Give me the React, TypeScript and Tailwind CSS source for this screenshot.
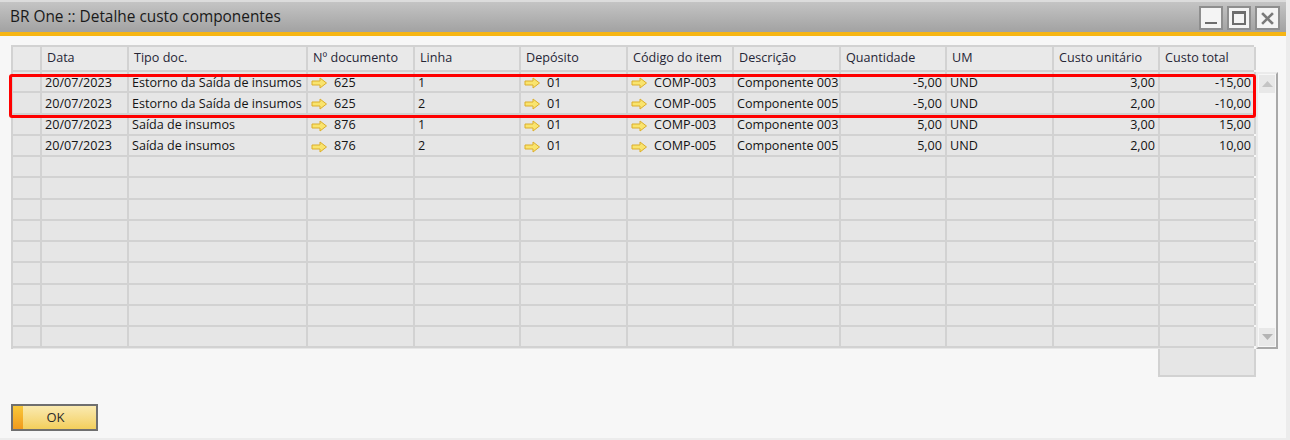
import React from "react";

const cols = [29, 87, 179, 107, 106, 107, 106, 107, 106, 107, 106, 96];
const headers = ["", "Data", "Tipo doc.", "Nº documento", "Linha", "Depósito", "Código do item", "Descrição", "Quantidade", "UM", "Custo unitário", "Custo total"];

type Row = { d: string; t: string; n: string; l: string; dep: string; c: string; desc: string; q: string; um: string; cu: string; ct: string };
const rows: Row[] = [
  { d: "20/07/2023", t: "Estorno da Saída de insumos", n: "625", l: "1", dep: "01", c: "COMP-003", desc: "Componente 003", q: "-5,00", um: "UND", cu: "3,00", ct: "-15,00" },
  { d: "20/07/2023", t: "Estorno da Saída de insumos", n: "625", l: "2", dep: "01", c: "COMP-005", desc: "Componente 005", q: "-5,00", um: "UND", cu: "2,00", ct: "-10,00" },
  { d: "20/07/2023", t: "Saída de insumos", n: "876", l: "1", dep: "01", c: "COMP-003", desc: "Componente 003", q: "5,00", um: "UND", cu: "3,00", ct: "15,00" },
  { d: "20/07/2023", t: "Saída de insumos", n: "876", l: "2", dep: "01", c: "COMP-005", desc: "Componente 005", q: "5,00", um: "UND", cu: "2,00", ct: "10,00" },
];

function Arrow() {
  return (
    <svg width="17" height="12" viewBox="0 0 17 12" className="mr-[6px] shrink-0">
      <path d="M1 4 H9 V1 L15.5 6 L9 11 V8 H1 Z" fill="#f9e46e" stroke="#dcae2a" strokeWidth="1" strokeLinejoin="round" />
    </svg>
  );
}

function Cell({ w, children, right, last }: { w: number; children?: React.ReactNode; right?: boolean; last?: boolean }) {
  return (
    <div
      style={{ width: w }}
      className={`h-full shrink-0 ${last ? "" : "border-r-2"} border-[#d2d2d2] flex items-center overflow-hidden whitespace-nowrap px-[3px] pt-[3px] ${right ? "justify-end" : ""}`}
    >
      {children}
    </div>
  );
}

export default function App() {
  const empty = Array.from({ length: 9 });
  return (
    <div className="w-[1290px] h-[440px] bg-[#ececec] text-[#141414] overflow-hidden" style={{ fontFamily: '"Open Sans", "Noto Sans", sans-serif' }}>
      <div className="w-[1286px] h-[438px] bg-[#f7f7f7] flex flex-col">
        {/* Title bar */}
        <div className="h-[32px] bg-gradient-to-b from-[#c4c4c4] to-[#a2a2a2] border-t-2 border-[#dcdcdc] flex items-center justify-between pl-[10px] pr-[6px]">
          <span className="text-[15.4px] text-[#1a1a1a]">BR One :: Detalhe custo componentes</span>
          <div className="flex gap-[4px] mt-[2px]">
            <div className="w-[24px] h-[24px] bg-[#f4f4f4] border-2 border-[#8e8e8e] flex items-end justify-center pb-[4px]">
              <div className="w-[12px] h-[2px] bg-[#6d6d6d]" />
            </div>
            <div className="w-[24px] h-[24px] bg-[#f4f4f4] border-2 border-[#8e8e8e] flex items-center justify-center">
              <div className="w-[14px] h-[14px] border-2 border-t-[3px] border-[#6d6d6d]" />
            </div>
            <div className="w-[25px] h-[24px] bg-[#f4f4f4] border-2 border-[#8e8e8e] flex items-center justify-center">
              <svg width="13" height="13" viewBox="0 0 13 13">
                <path d="M2 2 L11 11 M11 2 L2 11" stroke="#7a7a7a" strokeWidth="2.6" strokeLinecap="square" />
              </svg>
            </div>
          </div>
        </div>
        <div className="h-[4px] bg-[#f6b514]" />

        {/* Grid area */}
        <div className="relative pl-[11px] pt-[9px] text-[12.6px]">
          <div className="w-[1243px] border-l-2 border-t-2 border-[#d2d2d2]">
            {/* Header */}
            <div className="flex h-[25px] bg-[#e9e9e9] border-b-2 border-[#d2d2d2]">
              {headers.map((h, i) => (
                <div key={i} style={{ width: cols[i] }} className="shrink-0 h-full border-r-2 border-[#d2d2d2] px-[5px] pt-[2px] text-[#262636] whitespace-nowrap overflow-hidden">
                  {h}
                </div>
              ))}
            </div>
          </div>
          <div className="flex">
            <div className="w-[1243px] border-l-2 border-[#d2d2d2] bg-[#e6e6e6]">
              {rows.map((r, i) => (
                <div key={i} className="flex h-[21.25px] border-b-2 border-[#d2d2d2]">
                  <Cell w={cols[0]} />
                  <Cell w={cols[1]}>{r.d}</Cell>
                  <Cell w={cols[2]}>{r.t}</Cell>
                  <Cell w={cols[3]}><Arrow />{r.n}</Cell>
                  <Cell w={cols[4]}>{r.l}</Cell>
                  <Cell w={cols[5]}><Arrow />{r.dep}</Cell>
                  <Cell w={cols[6]}><Arrow />{r.c}</Cell>
                  <Cell w={cols[7]}>{r.desc}</Cell>
                  <Cell w={cols[8]} right>{r.q}</Cell>
                  <Cell w={cols[9]}>{r.um}</Cell>
                  <Cell w={cols[10]} right>{r.cu}</Cell>
                  <Cell w={cols[11]} right>{r.ct}</Cell>
                </div>
              ))}
              {empty.map((_, i) => (
                <div key={i} className="flex h-[21.25px] border-b-2 border-[#d2d2d2]">
                  {cols.map((w, j) => (
                    <Cell key={j} w={w} />
                  ))}
                </div>
              ))}
            </div>
            {/* Scrollbar */}
            <div className="ml-[2px] w-[22px] h-[277px] bg-[#f7f7f7] border-2 border-l-[#ebebeb] border-t-[#ebebeb] border-r-[#a9a9a9] border-b-[#a9a9a9] flex flex-col justify-between p-[1px]">
              <div className="h-[18px] bg-[#e8e8e8] flex items-center justify-center">
                <svg width="11" height="6" viewBox="0 0 11 6"><path d="M0 6 L5.5 0 L11 6 Z" fill="#c4c4c4" /></svg>
              </div>
              <div className="h-[18px] bg-[#e8e8e8] flex items-center justify-center">
                <svg width="11" height="6" viewBox="0 0 11 6"><path d="M0 0 L5.5 6 L11 0 Z" fill="#b4b4b4" /></svg>
              </div>
            </div>
          </div>
          {/* total cell */}
          <div className="flex">
            <div className="ml-[1147px] w-[98px] h-[28px] bg-[#e6e6e6] border-2 border-t-0 border-[#d2d2d2]" />
          </div>

          {/* Red highlight */}
          <div className="absolute left-[9px] top-[38px] w-[1247px] h-[44px] border-[3px] border-[#ff0000] rounded-[3px] pointer-events-none" />
        </div>

        {/* OK button */}
        <div className="pl-[11px] mt-[27px]">
          <div className="relative w-[87px] h-[27px] border-2 border-[#6f6f6f] bg-gradient-to-b from-[#faeab0] to-[#f3cf5a] flex items-center justify-center overflow-hidden">
            <div className="absolute left-0 top-0 bottom-0 w-[10px] bg-gradient-to-b from-[#f8c83a] to-[#f09a1c]" />
            <span className="text-[13px] text-[#2a2a2a] ml-[2px]">OK</span>
          </div>
        </div>
      </div>
    </div>
  );
}
